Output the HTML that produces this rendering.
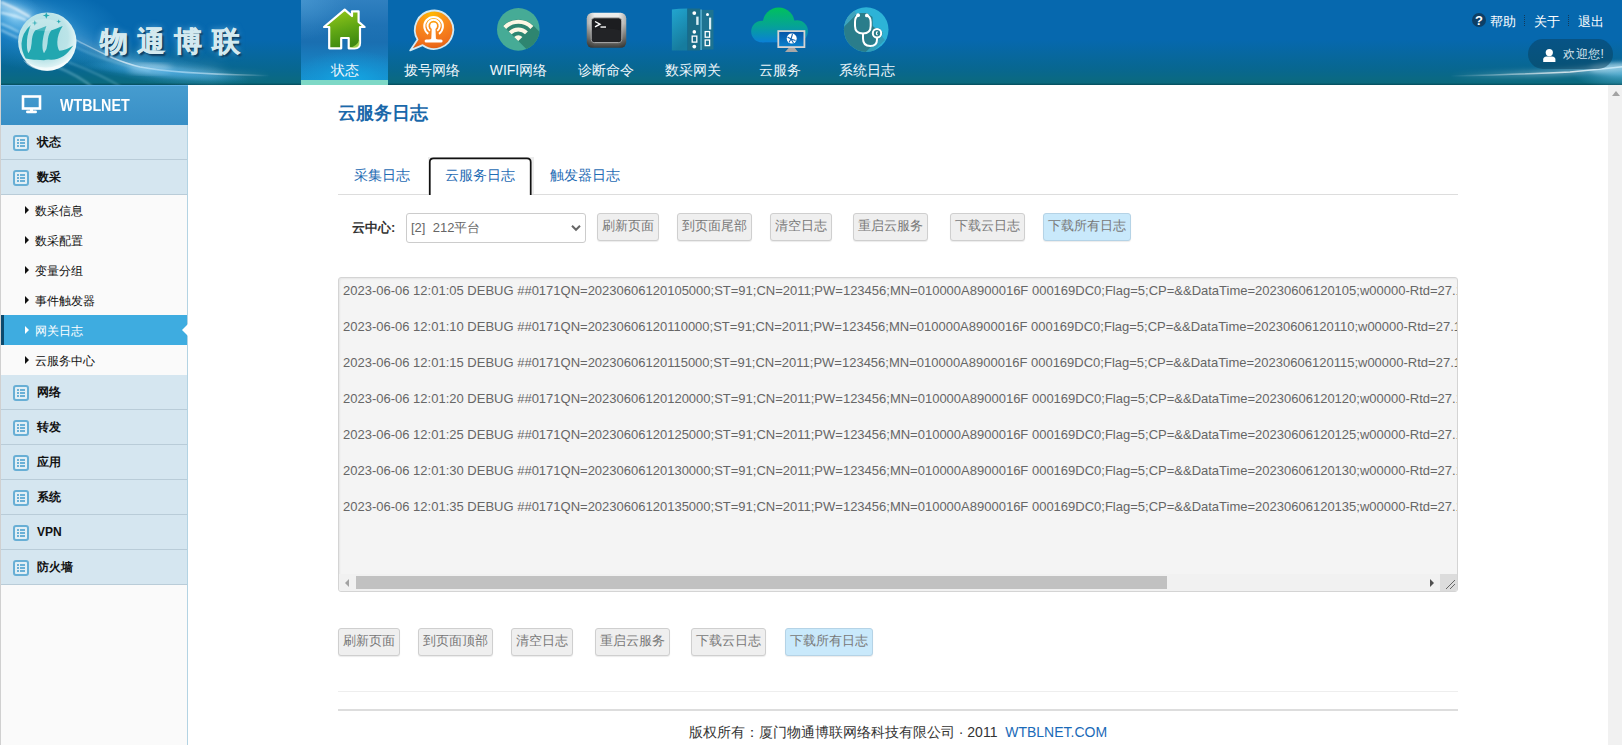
<!DOCTYPE html>
<html><head><meta charset="utf-8">
<style>
*{box-sizing:border-box}
html,body{margin:0;padding:0}
body{width:1622px;height:745px;overflow:hidden;position:relative;background:#fff;font-family:"Liberation Sans",sans-serif;}
.abs{position:absolute}
#hdr{position:absolute;left:0;top:0;width:1622px;height:85px;background:linear-gradient(to bottom,#0668ae 0px,#0668ae 40px,#08678f 70px,#0b6a7e 83px,#075668 84px,#06505f 85px);overflow:hidden}
#hdrL{position:absolute;left:0;top:0;width:1px;height:85px;background:#d8dde0}
.nav{position:absolute;top:0;width:87px;height:85px;text-align:center;color:#fff}
.nav .lbl{position:absolute;left:0;width:87px;top:61px;font-size:14px;line-height:18px;color:#eef6fb}
.nav svg{position:absolute;left:0;top:0}
#side{position:absolute;left:0;top:85px;width:188px;height:660px;background:#fafafa;border-left:1px solid #d0d0d0;border-right:1px solid #b3d3e3}
#sideHd{position:absolute;left:0;top:0;width:187px;height:40px;background:linear-gradient(#469ccf,#388fc6);border-top:1px solid #62b3ea}
.mi{position:absolute;left:0;width:186px;height:35px;background:#d5e6f0;border-bottom:1px solid #b9ccd8;font-size:12px;font-weight:bold;color:#111}
.mi .ic{position:absolute;left:12px;top:10px;width:16px;height:16px;border:2px solid #68afd5;border-radius:3px;background:#e2eff5}
.mi .tx{position:absolute;left:36px;top:9px;line-height:16px}
.si{position:absolute;left:0;width:186px;height:30px;font-size:12px;color:#111}
.si .tri{position:absolute;left:24px;top:11px;width:0;height:0;border-left:4px solid #111;border-top:4px solid transparent;border-bottom:4px solid transparent}
.si .tx{position:absolute;left:34px;top:8px;line-height:16px}
#main{position:absolute;left:188px;top:85px;width:1420px;height:660px;background:#fff}
#vs{position:absolute;left:1608px;top:85px;width:14px;height:660px;background:#f1f1f1}
.btn{position:absolute;height:28px;border:1px solid #cfcfcf;border-radius:3px;background:#efefef;font-size:13px;color:#777;text-align:center;line-height:24px;box-shadow:0 1px 1px rgba(0,0,0,.08)}
.btn.act{background:#c9e9fb;border-color:#b5d3e6}
.log{position:absolute;left:4px;font-size:13px;color:#666;white-space:nowrap;line-height:18px}
.si.act{background:#3eace0;color:#fff}
.si.act .tri{border-left-color:#fff}
.si.act:before{content:"";position:absolute;left:0;top:0;width:3px;height:30px;background:#0b4a6e}
.notch{position:absolute;right:-1px;top:9px;width:0;height:0;border-right:6px solid #fff;border-top:6px solid transparent;border-bottom:6px solid transparent}
.mi .ic:before{content:"";position:absolute;left:2px;top:2px;width:2px;height:2px;background:#6ab0d6;box-shadow:0 3px 0 #6ab0d6,0 6px 0 #6ab0d6}
.mi .ic:after{content:"";position:absolute;left:5px;top:2px;width:5px;height:2px;background:#6ab0d6;box-shadow:0 3px 0 #6ab0d6,0 6px 0 #6ab0d6}
#navAct{position:absolute;left:301px;top:0;width:87px;height:85px;background:radial-gradient(ellipse 60px 30px at 50px 80px,rgba(20,170,230,0.85) 0%,rgba(20,160,224,0.4) 55%,rgba(20,150,220,0) 100%),radial-gradient(ellipse 50px 40px at 0px 0px,rgba(80,160,215,0.6) 0%,rgba(80,160,215,0) 100%),linear-gradient(to bottom,#3080c0 0%,#1f72b4 30%,#1a6fb1 50%,#1882c2 75%,#1494d2 100%)}
#navAct:after{content:"";position:absolute;left:0;right:0;bottom:0;height:5px;background:#7ed8c6}
</style></head><body>

<div id="hdr">
  <div id="hdrL"></div>
  <svg class="abs" style="left:0;top:0" width="420" height="85">
    <defs>
      <filter id="b1" x="-20%" y="-50%" width="140%" height="200%"><feGaussianBlur stdDeviation="0.8"/></filter>
      <filter id="b3" x="-20%" y="-50%" width="140%" height="200%"><feGaussianBlur stdDeviation="3"/></filter>
      <filter id="b6" x="-20%" y="-50%" width="140%" height="200%"><feGaussianBlur stdDeviation="7"/></filter>
      <radialGradient id="glow" cx="0.5" cy="0.5" r="0.5"><stop offset="0" stop-color="#3aa4e0" stop-opacity="0.8"/><stop offset="1" stop-color="#3aa4e0" stop-opacity="0"/></radialGradient>
      <radialGradient id="sph" cx="0.45" cy="0.42" r="0.58"><stop offset="0" stop-color="#a9dde2"/><stop offset="0.7" stop-color="#bce4e8"/><stop offset="0.9" stop-color="#dcf2f4"/><stop offset="1" stop-color="#eef9fa"/></radialGradient>
    </defs>
    <ellipse cx="40" cy="30" rx="80" ry="40" fill="url(#glow)" opacity="0.8"/>
    <ellipse cx="150" cy="68" rx="100" ry="14" fill="url(#glow)" opacity="0.7" transform="rotate(8 150 68)"/>
    <linearGradient id="sf" x1="70" y1="0" x2="270" y2="0" gradientUnits="userSpaceOnUse"><stop offset="0" stop-color="#fff" stop-opacity="0.25"/><stop offset="0.25" stop-color="#fff" stop-opacity="0.6"/><stop offset="0.4" stop-color="#fff" stop-opacity="1"/><stop offset="0.7" stop-color="#fff" stop-opacity="0.6"/><stop offset="1" stop-color="#fff" stop-opacity="0"/></linearGradient>
    <path d="M-5,0 Q30,4 60,26 Q90,50 150,66 Q180,71 220,73" fill="none" stroke="#bfe8ff" stroke-width="10" opacity="0.25" filter="url(#b6)"/>
    <radialGradient id="tlg" cx="0.5" cy="0.5" r="0.5"><stop offset="0" stop-color="#9ad8fa" stop-opacity="0.85"/><stop offset="0.5" stop-color="#6cc0f0" stop-opacity="0.45"/><stop offset="1" stop-color="#4aa8e8" stop-opacity="0"/></radialGradient><ellipse cx="14" cy="17" rx="42" ry="24" fill="url(#tlg)" transform="rotate(28 14 17)"/>
    <path d="M-3,4 Q15,9 31,17" fill="none" stroke="#ffffff" stroke-width="7" opacity="0.45" filter="url(#b3)"/>
    <path d="M1,2 Q16,8 30,17" fill="none" stroke="#ffffff" stroke-width="1.6" opacity="0.85" filter="url(#b1)"/>
    <path d="M1,12.7 Q14,15 26,20" fill="none" stroke="#f0faff" stroke-width="2.2" opacity="0.7" filter="url(#b1)"/>
    <path d="M1,23.5 Q10,27 19,32" fill="none" stroke="#d8f2ff" stroke-width="1.4" opacity="0.7" filter="url(#b1)"/>
    <path d="M1,30 Q9,34 18,38" fill="none" stroke="#d8f2ff" stroke-width="1.4" opacity="0.6" filter="url(#b1)"/>
    <path d="M74,39 C100,52 118,62 140,67 C165,72 200,74.5 270,75.5" fill="none" stroke="url(#sf)" stroke-width="4" opacity="0.5" filter="url(#b3)"/>
    <path d="M74,39 C100,52 118,62 140,67 C165,72 200,74.5 270,75.5" fill="none" stroke="url(#sf)" stroke-width="1.5"/>
    <ellipse cx="150" cy="69" rx="22" ry="3.5" fill="#fff" opacity="0.55" filter="url(#b3)"/>
    <ellipse cx="165" cy="72" rx="85" ry="7" fill="url(#glow)" opacity="0.8" transform="rotate(5 165 72)"/>
    <path d="M74,46 Q100,60 150,71" fill="none" stroke="#9fdcf5" stroke-width="1.2" opacity="0.5" filter="url(#b1)"/>
    <path d="M55,66 Q80,76 96,90" fill="none" stroke="#a8e0f0" stroke-width="2" opacity="0.4" filter="url(#b1)"/>
    <path d="M68,62 Q105,76 126,90" fill="none" stroke="#a8e0f0" stroke-width="1.5" opacity="0.35" filter="url(#b1)"/>
    <circle cx="47.3" cy="41.6" r="29.2" fill="url(#sph)"/>
    <path d="M30.7,25 Q26.5,36 26.9,45 Q27,51 28.5,53.2 Q31.5,49 31.6,43.6 Q31.8,35 35.1,30.6 L46.4,25.9 Q42.6,36 42.4,45 Q42.4,51 44,53.2 Q47.3,49 47.5,43.6 Q47.8,35 51.1,30.6 L62.7,26 Q57.5,34 57.3,42 Q57.3,48 59.4,50.8 Q66,50 73.3,45.4 Q68,53 63.6,56 Q58,59.5 51.2,59.8 Q47,59 44,60.3 Q39,59.5 34,59.8 Q30,59 25.7,58.4 Q21.5,52 21.5,43.6 Q22,33 30.7,25 Z" fill="#22a7b0"/>
    <path d="M34.8,20.2 L35.7,22.4 L37.9,23 L35.7,23.6 L34.8,25.8 L33.9,23.6 L31.7,23 L33.9,22.4 Z" fill="#23a8b1"/>
    <path d="M46.3,12.2 L47.3,14.8 L49.9,15.5 L47.3,16.2 L46.3,18.8 L45.3,16.2 L42.7,15.5 L45.3,14.8 Z" fill="#23a8b1"/>
    <path d="M58.7,19.4 L59.5,21.2 L61.3,21.6 L59.5,22.1 L58.7,23.8 L57.9,22.1 L56.1,21.6 L57.9,21.2 Z" fill="#23a8b1"/>
    <ellipse cx="44" cy="25" rx="16" ry="6" fill="#fff" opacity="0.18"/>
    <path d="M23,60 Q47,76 71,58 Q62,70 47,71 Q31,70.5 23,60 Z" fill="#fff" opacity="0.55"/>
  </svg>
  <div class="abs" style="left:100px;top:24px;font-size:28px;font-weight:900;letter-spacing:9.2px;-webkit-text-stroke:0.5px #d3e9ef;color:#d3e9ef;line-height:36px;white-space:nowrap;text-shadow:2px 2px 2px #0a3558,0 0 6px rgba(190,235,255,.5)">物通博联</div>
  <div id="navAct"></div>
  <div class="nav" style="left:301px">
    <svg width="87" height="60"><defs><linearGradient id="gh" x1="0" y1="0" x2="0.3" y2="1"><stop offset="0" stop-color="#9ccc1c"/><stop offset="0.6" stop-color="#5fa614"/><stop offset="1" stop-color="#3f8a10"/></linearGradient></defs>
    <path d="M43.7,9.6 L51,16 L51,11.4 L57.6,11.4 L57.6,21.8 L63.6,27 L59,27 L59,43 Q59,48.3 53.5,48.3 L47.7,48.3 L47.7,38 L40.2,38 L40.2,48.3 L28.2,48.3 L28.2,27 L23,27 Z" fill="url(#gh)" stroke="#fff" stroke-width="2.2" stroke-linejoin="round"/>
    <path d="M58.5,39.5 Q56,46.5 48.5,47.8 L53.5,47.8 Q58.5,47.5 58.5,43 Z" fill="#b6e05a" opacity="0.8"/>
    </svg>
    <div class="lbl">状态</div>
  </div>
  <div class="nav" style="left:388px">
    <svg width="87" height="60"><defs><radialGradient id="go" cx="0.5" cy="0.08" r="0.95"><stop offset="0" stop-color="#ffb800"/><stop offset="0.4" stop-color="#fa8a1c"/><stop offset="0.8" stop-color="#ef6e1a"/><stop offset="1" stop-color="#d85814"/></radialGradient></defs>
    <path d="M34.7,45.2 A19.2,19.2 0 1 0 29.6,39.6 L22.2,50.4 Z" fill="url(#go)" stroke="#d2eaf4" stroke-width="1.8" stroke-linejoin="round"/>
    <path d="M40.2,33.8 A9.3,9.3 0 1 1 51,33.8" fill="none" stroke="#fff" stroke-width="2.1"/>
    <path d="M42,30.8 A6.1,6.1 0 1 1 49.2,30.8" fill="none" stroke="#fff" stroke-width="2"/>
    <circle cx="45.6" cy="25.8" r="3.4" fill="#fff"/>
    <path d="M43.8,27 L47.4,27 L47.9,38.5 Q48.1,39.5 50.6,39.6 L53.1,39.6 Q54.6,39.7 54.6,41.1 Q54.6,42.6 53.1,42.6 L38.1,42.6 Q36.6,42.6 36.6,41.1 Q36.6,39.7 38.1,39.6 L40.6,39.6 Q43.1,39.5 43.3,38.5 Z" fill="#fff"/>
    </svg>
    <div class="lbl">拨号网络</div>
  </div>
  <div class="nav" style="left:475px">
    <svg width="87" height="60"><defs><clipPath id="cw"><circle cx="43.3" cy="29.4" r="21.3"/></clipPath></defs>
    <circle cx="43.3" cy="29.4" r="21.3" fill="#46ab96"/>
    <g clip-path="url(#cw)"><path d="M28.03,25.73 A21.6,21.6 0 0 1 58.57,25.73 L85,52.2 L70,67.7 L43.3,41 Z" fill="#2e8570"/></g>
    <path d="M29.7,27.4 A19.25,19.25 0 0 1 56.9,27.4" fill="none" stroke="#fdf7e4" stroke-width="4.2"/>
    <path d="M35.17,32.87 A11.5,11.5 0 0 1 51.43,32.87" fill="none" stroke="#fdf7e4" stroke-width="4"/>
    <path d="M43.3,41 L39.2,36.9 A5.8,5.8 0 0 1 47.4,36.9 Z" fill="#fdf7e4"/>
    </svg>
    <div class="lbl">WIFI网络</div>
  </div>
  <div class="nav" style="left:562px">
    <svg width="87" height="60"><defs><linearGradient id="gt" x1="0" y1="0" x2="0" y2="1"><stop offset="0" stop-color="#f0f0ee"/><stop offset="0.3" stop-color="#e4e4e2"/><stop offset="0.7" stop-color="#8c8c88"/><stop offset="1" stop-color="#3c3c3a"/></linearGradient>
    <linearGradient id="gt2" x1="0" y1="0" x2="1" y2="0"><stop offset="0" stop-color="#000" stop-opacity="0.25"/><stop offset="0.2" stop-color="#000" stop-opacity="0"/><stop offset="0.8" stop-color="#000" stop-opacity="0"/><stop offset="1" stop-color="#000" stop-opacity="0.25"/></linearGradient></defs>
    <rect x="24.8" y="12.8" width="39.4" height="35" rx="5.5" fill="url(#gt)"/>
    <rect x="24.8" y="12.8" width="39.4" height="35" rx="5.5" fill="url(#gt2)"/>
    <rect x="29.3" y="17.8" width="30.4" height="24.8" rx="3.2" fill="#1c1d20" stroke="#b8b8b8" stroke-width="0.9"/>
    <path d="M29.9,30.5 Q44.5,26.5 59.1,30.5 L59.1,39.5 Q59.1,42 56.5,42 L32.5,42 Q29.9,42 29.9,39.5 Z" fill="#222326"/>
    <path d="M33,21.5 L38,24.2 L33,26.9" fill="none" stroke="#fff" stroke-width="1.4"/>
    <rect x="38.5" y="26.3" width="5.5" height="1.5" fill="#e8e8e8"/>
    </svg>
    <div class="lbl">诊断命令</div>
  </div>
  <div class="nav" style="left:649px">
    <svg width="87" height="60"><defs><linearGradient id="gg" x1="0" y1="0" x2="0.3" y2="1"><stop offset="0" stop-color="#22a6d0"/><stop offset="1" stop-color="#167c9e"/></linearGradient></defs>
    <path d="M22.9,9.5 L30,8.8 L38.3,8.5 L38.3,50.5 L22.9,50.5 Z" fill="url(#gg)"/>
    <rect x="38.3" y="8.5" width="12.9" height="42" fill="#1a6d88"/>
    <rect x="51.2" y="9.5" width="1.8" height="40.5" fill="#4fa6c2"/>
    <rect x="53" y="9.9" width="11.5" height="39.6" fill="#1d7391"/>
    <circle cx="45.3" cy="13.1" r="1.9" fill="#fff"/><circle cx="45.3" cy="31.9" r="1.8" fill="#fff"/><circle cx="45.3" cy="46.6" r="1.9" fill="#fff"/>
    <rect x="47.2" y="16.6" width="2.4" height="8.3" fill="#d8eef4"/>
    <rect x="43.2" y="36.1" width="4.6" height="6" fill="none" stroke="#fff" stroke-width="1.3"/>
    <circle cx="58.5" cy="14.5" r="1.5" fill="#fff"/>
    <rect x="60" y="17.6" width="2.2" height="11.9" fill="#d8eef4"/>
    <rect x="56.2" y="31.6" width="4.4" height="5.6" fill="none" stroke="#fff" stroke-width="1.3"/>
    <rect x="56.2" y="40" width="4.4" height="5.6" fill="none" stroke="#fff" stroke-width="1.3"/>
    </svg>
    <div class="lbl">数采网关</div>
  </div>
  <div class="nav" style="left:736px">
    <svg width="87" height="60"><defs><linearGradient id="gc" x1="0" y1="7.5" x2="0" y2="42.3" gradientUnits="userSpaceOnUse"><stop offset="0" stop-color="#00c15c"/><stop offset="0.5" stop-color="#05a592"/><stop offset="1" stop-color="#0a80d6"/></linearGradient><linearGradient id="gs" x1="0" y1="0" x2="0" y2="1"><stop offset="0" stop-color="#0756a8"/><stop offset="1" stop-color="#0a80cc"/></linearGradient></defs>
    <g fill="url(#gc)"><circle cx="26" cy="31.5" r="10.8"/><circle cx="42.7" cy="23.5" r="16"/><circle cx="61" cy="31.2" r="11"/><rect x="26" y="28" width="35" height="14.3"/></g>
    <rect x="41.4" y="30.2" width="27.9" height="17.8" fill="#d6d3d2"/>
    <rect x="43.2" y="32" width="24.3" height="14.2" fill="url(#gs)"/>
    <path d="M52.6,48 L58.8,48 L62,52 L49,52 Z" fill="#a9a7a6"/>
    <circle cx="55.7" cy="38.6" r="5" fill="#fff"/>
    <path d="M51.5,37 L55,39 L53,42.5 M56.5,34 L55,39 L59.5,40.5 M55,39 L57.5,43" fill="none" stroke="#1a66b0" stroke-width="1.1"/>
    </svg>
    <div class="lbl">云服务</div>
  </div>
  <div class="nav" style="left:823px">
    <svg width="87" height="60"><defs><clipPath id="cs"><circle cx="43.2" cy="29.6" r="22.3"/></clipPath></defs>
    <circle cx="43.2" cy="29.6" r="22.3" fill="#2db3d7"/>
    <g clip-path="url(#cs)">
      <path d="M33.5,14 L37,13 L44,13 L49.5,17 L49.8,26 L52,28 L57,28.5 L59.8,33 L58.8,36.2 L20,75 L0,75 L0,47.5 Z" fill="#2a7d8b"/>
      <path d="M0,47.5 L33.5,14 L31,10 L0,40 Z" fill="#3ea3bd"/>
      <path d="M58.8,36.2 L20,75 L26,75 L62,40 Z" fill="#3496ad" opacity="0.7"/>
    </g>
    <path d="M35.1,15.5 Q32,17 32,22 L32,26 Q32,33.5 40,33.5 Q47.7,33.5 47.7,26 L47.7,22 Q47.7,17 43.9,15.5" fill="none" stroke="#fff" stroke-width="2"/>
    <circle cx="35.1" cy="15.2" r="1.9" fill="#fff"/><circle cx="43.9" cy="15.4" r="1.9" fill="#fff"/>
    <path d="M40,33.5 L40,38.5 Q40,46 47.2,46 Q54,46 54,39.5 L54,37.6" fill="none" stroke="#fff" stroke-width="2"/>
    <circle cx="54" cy="33.3" r="4.2" fill="#2a7d8b" stroke="#fff" stroke-width="2"/>
    <path d="M54.6,31.6 A1.8,1.8 0 0 0 54.6,35" fill="none" stroke="#fff" stroke-width="1.2"/>
    </svg>
    <div class="lbl">系统日志</div>
  </div>
  <div class="abs" style="left:1472px;top:13px;width:14px;height:14px;border-radius:7px;background:#0d3f66;color:#fff;font-size:13px;font-weight:bold;text-align:center;line-height:15px">?</div>
  <div class="abs" style="left:1490px;top:13px;font-size:13px;color:#fff;line-height:17px">帮助</div>
  <div class="abs" style="left:1524px;top:15px;width:1px;height:11px;border-left:1px dotted #123a5a"></div>
  <div class="abs" style="left:1534px;top:13px;font-size:13px;color:#fff;line-height:17px">关于</div>
  <div class="abs" style="left:1568px;top:15px;width:1px;height:11px;border-left:1px dotted #123a5a"></div>
  <div class="abs" style="left:1578px;top:13px;font-size:13px;color:#fff;line-height:17px">退出</div>
  <svg class="abs" style="left:1400px;top:40px" width="222" height="45">
    <defs><filter id="b2r" x="-50%" y="-100%" width="200%" height="300%"><feGaussianBlur stdDeviation="2.5"/></filter><filter id="b1r" x="-50%" y="-100%" width="200%" height="300%"><feGaussianBlur stdDeviation="0.7"/></filter>
    <linearGradient id="sg" x1="0" y1="0" x2="1" y2="0"><stop offset="0" stop-color="#fff" stop-opacity="0"/><stop offset="0.55" stop-color="#fff" stop-opacity="0.7"/><stop offset="1" stop-color="#fff" stop-opacity="1"/></linearGradient></defs>
    <path d="M50,36 Q130,34.5 170,31.5 Q200,29 230,25.5" fill="none" stroke="url(#sg)" stroke-width="6" opacity="0.45" filter="url(#b2r)"/>
    <path d="M50,36 Q130,34 170,32 Q200,29.5 230,26" fill="none" stroke="url(#sg)" stroke-width="1.5" opacity="0.95" filter="url(#b1r)"/>
    <ellipse cx="212" cy="29" rx="22" ry="5" fill="#e8f8ff" opacity="0.5" filter="url(#b2r)"/>
    <radialGradient id="brg" cx="0.5" cy="0.5" r="0.5"><stop offset="0" stop-color="#6cc6ec" stop-opacity="0.6"/><stop offset="1" stop-color="#6cc6ec" stop-opacity="0"/></radialGradient><ellipse cx="222" cy="34" rx="50" ry="14" fill="url(#brg)"/>
  </svg>
  <div class="abs" style="left:1528px;top:39px;width:85px;height:30px;border-radius:15px;background:rgba(8,62,92,.5)"></div>
  <svg class="abs" style="left:1542px;top:48px" width="15" height="15" viewBox="0 0 15 15"><circle cx="7.3" cy="4.6" r="3.6" fill="#fff"/><path d="M1.2,14 L1.2,11.5 Q1.2,8.6 4.5,8.4 L10,8.4 Q13.4,8.6 13.4,11.5 L13.4,14 Z" fill="#fff"/></svg>
  <div class="abs" style="left:1563px;top:46px;font-size:12px;letter-spacing:0.5px;color:#d6e3ec;line-height:17px;white-space:nowrap">欢迎您!</div>
</div>

<div id="side">
  <div id="sideHd">
    <svg class="abs" style="left:20px;top:9px" width="22" height="20" viewBox="0 0 22 20"><rect x="2" y="1.5" width="17" height="12" fill="none" stroke="#fff" stroke-width="2.6"/><rect x="9" y="13" width="3" height="3" fill="#fff"/><rect x="5" y="15.5" width="11" height="2.8" rx="1.4" fill="#fff"/></svg>
    <div class="abs" style="left:59px;top:10px;font-size:16px;font-weight:bold;color:#fff;line-height:20px;transform:scaleX(0.89);transform-origin:0 0;white-space:nowrap">WTBLNET</div>
  </div>
  <div class="mi" style="top:40px"><div class="ic"></div><div class="tx">状态</div></div>
  <div class="mi" style="top:75px"><div class="ic"></div><div class="tx">数采</div></div>
  <div class="si" style="top:110px"><div class="tri"></div><div class="tx">数采信息</div></div>
  <div class="si" style="top:140px"><div class="tri"></div><div class="tx">数采配置</div></div>
  <div class="si" style="top:170px"><div class="tri"></div><div class="tx">变量分组</div></div>
  <div class="si" style="top:200px"><div class="tri"></div><div class="tx">事件触发器</div></div>
  <div class="si act" style="top:230px"><div class="tri"></div><div class="tx">网关日志</div><div class="notch"></div></div>
  <div class="si" style="top:260px"><div class="tri"></div><div class="tx">云服务中心</div></div>
  <div class="mi" style="top:290px"><div class="ic"></div><div class="tx">网络</div></div>
  <div class="mi" style="top:325px"><div class="ic"></div><div class="tx">转发</div></div>
  <div class="mi" style="top:360px"><div class="ic"></div><div class="tx">应用</div></div>
  <div class="mi" style="top:395px"><div class="ic"></div><div class="tx">系统</div></div>
  <div class="mi" style="top:430px"><div class="ic"></div><div class="tx">VPN</div></div>
  <div class="mi" style="top:465px"><div class="ic"></div><div class="tx">防火墙</div></div>
</div>

<div id="main"></div>
<div id="vs"><div class="abs" style="left:4px;top:6px;width:0;height:0;border-left:4px solid transparent;border-right:4px solid transparent;border-bottom:5px solid #a3a3a3"></div></div>

<div class="abs" style="left:338px;top:101px;font-size:18px;font-weight:bold;color:#1a68aa;line-height:24px">云服务日志</div>

<div class="abs" style="left:338px;top:194px;width:1120px;height:1px;background:#dddddd"></div>
<div class="abs" style="left:354px;top:166px;font-size:14px;color:#1f6cb4;line-height:18px">采集日志</div>
<div class="abs" style="left:428px;top:157px;width:106px;height:37px;background:#ececec"></div>
<svg class="abs" style="left:428px;top:156px" width="106" height="39"><path d="M1.8,39 L1.8,6 Q1.8,2.3 5.5,2.3 L99,2.3 Q102.7,2.3 102.7,6 L102.7,39" fill="#fff" stroke="#111" stroke-width="1.7"/></svg>
<div class="abs" style="left:445px;top:166px;font-size:14px;color:#1f6cb4;line-height:18px">云服务日志</div>
<div class="abs" style="left:550px;top:166px;font-size:14px;color:#1f6cb4;line-height:18px">触发器日志</div>

<div class="abs" style="left:352px;top:219px;font-size:13px;font-weight:bold;color:#333;line-height:18px">云中心:</div>
<div class="abs" style="left:406px;top:213px;width:180px;height:30px;border:1px solid #cccccc;border-radius:3px;background:#fff"></div>
<div class="abs" style="left:411px;top:219px;font-size:13px;color:#666;line-height:18px;white-space:pre">[2]  212平台</div>
<svg class="abs" style="left:568px;top:221px" width="16" height="14" viewBox="0 0 16 14"><path d="M4 4.8 L8 8.8 L12 4.8" fill="none" stroke="#666" stroke-width="2"/></svg>

<div class="btn" style="left:597px;top:213px;width:62px">刷新页面</div>
<div class="btn" style="left:677px;top:213px;width:75px">到页面尾部</div>
<div class="btn" style="left:770px;top:213px;width:62px">清空日志</div>
<div class="btn" style="left:853px;top:213px;width:75px">重启云服务</div>
<div class="btn" style="left:950px;top:213px;width:75px">下载云日志</div>
<div class="btn act" style="left:1043px;top:213px;width:88px">下载所有日志</div>

<div class="abs" style="left:338px;top:277px;width:1120px;height:315px;border:1px solid #d4d4d4;border-radius:3px;background:#f4f4f4;overflow:hidden;box-shadow:inset 1px 1px 2px rgba(0,0,0,.06)">
  <div class="log" style="top:4px">2023-06-06 12:01:05 DEBUG ##0171QN=20230606120105000;ST=91;CN=2011;PW=123456;MN=010000A8900016F 000169DC0;Flag=5;CP=&amp;&amp;DataTime=20230606120105;w00000-Rtd=27.1</div>
  <div class="log" style="top:40px">2023-06-06 12:01:10 DEBUG ##0171QN=20230606120110000;ST=91;CN=2011;PW=123456;MN=010000A8900016F 000169DC0;Flag=5;CP=&amp;&amp;DataTime=20230606120110;w00000-Rtd=27.1</div>
  <div class="log" style="top:76px">2023-06-06 12:01:15 DEBUG ##0171QN=20230606120115000;ST=91;CN=2011;PW=123456;MN=010000A8900016F 000169DC0;Flag=5;CP=&amp;&amp;DataTime=20230606120115;w00000-Rtd=27.1</div>
  <div class="log" style="top:112px">2023-06-06 12:01:20 DEBUG ##0171QN=20230606120120000;ST=91;CN=2011;PW=123456;MN=010000A8900016F 000169DC0;Flag=5;CP=&amp;&amp;DataTime=20230606120120;w00000-Rtd=27.1</div>
  <div class="log" style="top:148px">2023-06-06 12:01:25 DEBUG ##0171QN=20230606120125000;ST=91;CN=2011;PW=123456;MN=010000A8900016F 000169DC0;Flag=5;CP=&amp;&amp;DataTime=20230606120125;w00000-Rtd=27.1</div>
  <div class="log" style="top:184px">2023-06-06 12:01:30 DEBUG ##0171QN=20230606120130000;ST=91;CN=2011;PW=123456;MN=010000A8900016F 000169DC0;Flag=5;CP=&amp;&amp;DataTime=20230606120130;w00000-Rtd=27.1</div>
  <div class="log" style="top:220px">2023-06-06 12:01:35 DEBUG ##0171QN=20230606120135000;ST=91;CN=2011;PW=123456;MN=010000A8900016F 000169DC0;Flag=5;CP=&amp;&amp;DataTime=20230606120135;w00000-Rtd=27.1</div>
  <div class="abs" style="left:0;top:296px;width:1118px;height:17px;background:#f1f1f1"></div>
  <div class="abs" style="left:17px;top:298px;width:811px;height:13px;background:#c1c1c1"></div>
  <div class="abs" style="left:6px;top:301px;width:0;height:0;border-right:4px solid #a3a3a3;border-top:4px solid transparent;border-bottom:4px solid transparent"></div>
  <div class="abs" style="left:1091px;top:301px;width:0;height:0;border-left:4px solid #505050;border-top:4px solid transparent;border-bottom:4px solid transparent"></div>
  <div class="abs" style="left:1101px;top:296px;width:17px;height:17px;background:#dcdcdc"></div>
  <svg class="abs" style="left:1101px;top:296px" width="17" height="17"><path d="M6 15 L15 6 M10 15 L15 10" stroke="#666" stroke-width="1"/></svg>
</div>

<div class="btn" style="left:338px;top:628px;width:62px">刷新页面</div>
<div class="btn" style="left:418px;top:628px;width:75px">到页面顶部</div>
<div class="btn" style="left:511px;top:628px;width:62px">清空日志</div>
<div class="btn" style="left:595px;top:628px;width:75px">重启云服务</div>
<div class="btn" style="left:691px;top:628px;width:75px">下载云日志</div>
<div class="btn act" style="left:785px;top:628px;width:88px">下载所有日志</div>

<div class="abs" style="left:338px;top:691px;width:1120px;height:1px;background:#eeeeee"></div>
<div class="abs" style="left:338px;top:709px;width:1120px;height:2px;background:#dddddd"></div>
<div class="abs" style="left:338px;top:723px;width:1120px;text-align:center;font-size:14px;color:#333;line-height:18px">版权所有：厦门物通博联网络科技有限公司 · 2011&nbsp; <span style="color:#1a6ab8">WTBLNET.COM</span></div>


</body></html>
